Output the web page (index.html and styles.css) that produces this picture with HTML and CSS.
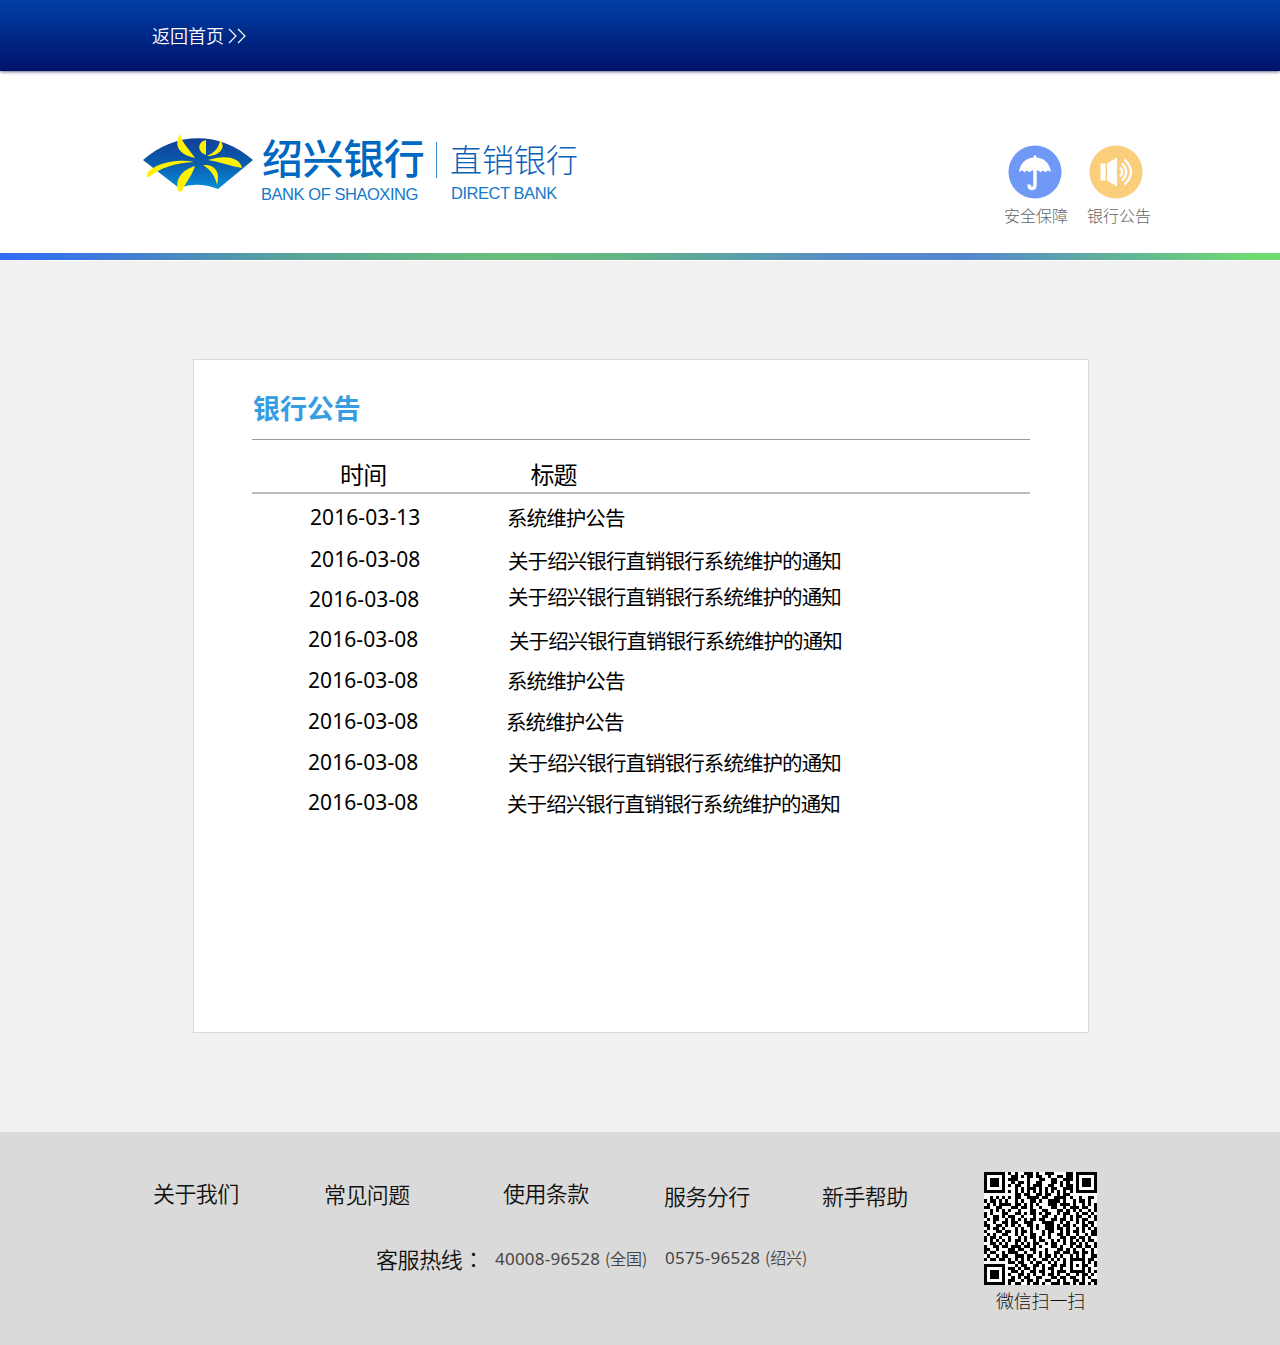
FILE: index.html
```html
<!DOCTYPE html>
<html lang="zh-CN">
<head>
  <meta charset="UTF-8" />
  <meta name="viewport" content="width=device-width, initial-scale=1" />
  <title>银行公告 - 绍兴银行直销银行</title>
  <link rel="stylesheet" href="styles.css">
</head>
<body>
  <div class="topbar">
    <a class="back">返回首页
      <svg width="20" height="18" viewBox="0 0 20 18"><path d="M2 2l7 7-7 7M11 2l7 7-7 7" fill="none" stroke="#fff" stroke-width="1.2"/></svg>
    </a>
  </div>

  <!-- Logo -->
  <div class="header">
    <svg class="fan" width="112" height="60" viewBox="0 0 112 60">
      <defs>
        <linearGradient id="fanBg" x1="0" y1="0" x2="0" y2="1">
          <stop offset="0" stop-color="#123f98"/>
          <stop offset="0.5" stop-color="#0a5cad"/>
          <stop offset="1" stop-color="#0a8ddb"/>
        </linearGradient>
      </defs>
      <path d="M1 26C34 -3 78 -3 111 26L76 55Q56 47 37 54Z" fill="url(#fanBg)"/>
      <g fill="#fff100">
        <path d="M38 0C40 9 48 16 53 24C38 21 31 12 38 0Z"/>
        <path d="M64 6C55 8 55 18 64 21Z"/>
        <path d="M78 6C85 14 77 22 65 22C73 18 77 14 78 6Z"/>
        <path d="M66 26C80 21 98 22 100 34C88 32 78 28 66 26Z"/>
        <path d="M61 31C72 30 79 37 75 51C73 42 69 36 61 31Z"/>
        <path d="M53 32C50 42 43 49 40 57Q37 59 36 56C33 45 40 36 53 32Z"/>
        <path d="M52 28C33 29 18 34 7 43Q4 44 5 40C9 31 34 24 52 28Z"/>
      </g>
    </svg>
    <div class="brand">
      <div class="brand-cn">绍兴银行</div>
      <div class="brand-en">BANK OF SHAOXING</div>
    </div>
    <div class="divider"></div>
    <div class="direct">
      <div class="direct-cn">直销银行</div>
      <div class="brand-en">DIRECT BANK</div>
    </div>
    <div class="shortcuts">
      <a class="shortcut">
        <svg width="54" height="54" viewBox="0 0 54 54">
          <circle cx="27" cy="27" r="26.5" fill="#6f98f7"/>
          <path d="M11 27.500C12 18 18 13 25.500 12.500Q25.500 10 27 10T28.500 12.500C36 13 42 18 43 27.500Q40 23.500 37.500 27.500Q35 24 32.500 27.500Q31 25 28.800 25.500H25.200Q23 25 21.500 27.500Q19 24 16.500 27.500Q14 23.500 11 27.500Z" fill="#fff"/>
          <path d="M27 24V40Q27 43.500 24 43.500T21 39.500" fill="none" stroke="#fff" stroke-width="3.400"/>
        </svg>
        <span>安全保障</span>
      </a>
      <a class="shortcut notice">
        <svg width="54" height="54" viewBox="0 0 54 54">
          <circle cx="27" cy="27" r="26.500" fill="#fbce7b"/>
          <path d="M11.500 18.500h5v17h-5zM18 18.500L28 12.500V41.500L18 35.500Z" fill="#fff"/>
          <path d="M31 22.500Q35.500 27 31 31.500M33 18.500Q41.500 27 33 35.500M35.500 14.500Q48.500 27 35.500 39.500" fill="none" stroke="#fff" stroke-width="2.400"/>
        </svg>
        <span>银行公告</span>
      </a>
    </div>
  </div>
  <div class="rainbow"></div>

  <!-- 公告列表 -->
  <div class="main">
    <div class="panel">
      <h2>银行公告</h2>
      <div class="row head"><span>时间</span><span>标题</span></div>
      <div class="row r1"><span class="date">2016-03-13</span><a>系统维护公告</a></div>
      <div class="row r2"><span class="date">2016-03-08</span><a>关于绍兴银行直销银行系统维护的通知</a></div>
      <div class="row r3"><span class="date">2016-03-08</span><a>关于绍兴银行直销银行系统维护的通知</a></div>
      <div class="row r4"><span class="date">2016-03-08</span><a>关于绍兴银行直销银行系统维护的通知</a></div>
      <div class="row r5"><span class="date">2016-03-08</span><a>系统维护公告</a></div>
      <div class="row r6"><span class="date">2016-03-08</span><a>系统维护公告</a></div>
      <div class="row r7"><span class="date">2016-03-08</span><a>关于绍兴银行直销银行系统维护的通知</a></div>
      <div class="row r8"><span class="date">2016-03-08</span><a>关于绍兴银行直销银行系统维护的通知</a></div>
    </div>
  </div>

  <div class="footer">
    <div class="footer-info">
      <div class="links">
        <a>关于我们</a><a>常见问题</a><a>使用条款</a><a>服务分行</a><a>新手帮助</a>
      </div>
      <div class="hotline">
        <span class="label">客服热线<span class="colon" lang="zh-TW">：</span></span>
        <span class="tel">40008-96528 <small>(全国)</small></span>
        <span class="tel tel2">0575-96528 <small>(绍兴)</small></span>
      </div>
    </div>
    <div class="wechat">
      <svg id="qr" width="113" height="113" viewBox="0 0 37 37" shape-rendering="crispEdges"></svg>
      <span>微信扫一扫</span>
    </div>
  </div>

  <script>
    // 二维码点阵
    const rows = [
      "#######.#.#..###.#..###....##.#######",
      "#.....#..##.#.##.##..#..##.##.#.....#",
      "#.###.#.###...#...##..##..###.#.###.#",
      "#.###.#..#.##.#..##...##.#.#..#.###.#",
      "#.###.#.#.##..#.###..##..#.##.#.###.#",
      "#.....#...#.#.###.#.#.##..###.#.....#",
      "#######.#.#.#.#.#.#.#.#.#.#.#.#######",
      "..........##.##..##.##..#.##.........",
      "..#.#.#.#.##..####.##..####.#..#..##.",
      "#.##.#.#..#.#..##.#..####.#..#.##.#..",
      ".#.#.####.##.#.#.#...###.###.#..#.#.#",
      "##..##...##.##.#..#...##..#.###.##..#",
      "..#.#.#.#..#...##..##...##.#.#.#..#.#",
      "#.#...##..##.#.##.#.##..#.##..#.##.#.",
      "#..##.#.##..#...#..##..#..#.#.##..#.#",
      ".#.##..#.#.#.#.##.##..##.##.#.#.##..#",
      "#..#..##.##..###...####..#.#..#.#.##.",
      "##..##.#.#.#..##.#..###.#.##.#..##.#.",
      ".#.##.#...#.#..#.#..###.##.#..#.#.#.#",
      "#...##.##.#.##.#...#.##..#.#.##.#..##",
      ".#.#..##..#.#..##..#.#..##.#..#..#.##",
      "#.##.#..#..#.#.##.#..#...##.##.##.#..",
      "#.#.#.#.#.##.#..#.##..#.#.#.#.#.#.##.",
      "..##.#.#..#.#.#.##..#.##..#.##.#.#..#",
      "#..##.##.###.##.#.#...##.#..#.##.##.#",
      "##..#...##.##..##...#...##.#.#..#..#.",
      "#.##..#.###..#..#.#.#..##.##.##.##.#.",
      ".#..#.##..###.##..#.##.#.#..#.#.#..##",
      "#.##.##.#.#.#.#.#..##.#.#.#.#####.##.",
      "........##.##..#.##..#.#..#.#...#.#.#",
      "#######...#.##..##.#..##.##.#.#.##..#",
      "#.....#.##.#.##.#..#.##..#..#...#.#..",
      "#.###.#..##.#..##.##..#.###.#####.#.#",
      "#.###.#.#..##.#.#..#.##.#..#..#.##.#.",
      "#.###.#..#.#.##..##...##.##.##..#.#..",
      "#.....#.##..#.##.#..##..#.#..##.#..##",
      "#######.#.##..#.##.#..###.##.#.##.#.#"
    ];
    let d = '';
    rows.forEach((row, y) => {
      [...row].forEach((c, x) => {
        if (c === '#') d += `M${x} ${y}h1v1h-1z`;
      });
    });
    document.getElementById('qr').innerHTML =
      `<rect width="37" height="37" fill="#fff"/><path d="${d}"/>`;
  </script>
</body>
</html>
```
FILE: styles.css
```css
* { box-sizing: border-box; }
body {
  margin: 0;
  width: 1280px;
  font-family: "Noto Sans", "Noto Sans CJK SC", sans-serif;
  background: #f1f1f1;
  color: #000;
}
svg { display: block; flex: none; }
.topbar {
  position: relative;
  height: 71px;
  padding: 0 0 1px 152px;
  display: flex;
  align-items: center;
  background: linear-gradient(#0040a5, #00126a);
  box-shadow: 0 1px 3px rgba(0, 0, 60, 0.6);
}
.back {
  display: flex;
  align-items: center;
  gap: 3px;
  color: #fff;
  font: 350 18px/26px "Noto Sans CJK SC", sans-serif;
}
.back svg { margin-top: 2px; }

/* Header */
.header {
  display: flex;
  align-items: flex-start;
  height: 182px;
  padding: 63px 127px 0 142px;
  background: #fff;
}
.brand {
  width: 164px;
  margin-left: 8px;
  color: #0068c0;
  white-space: nowrap;
}
.brand-cn {
  height: 50px;
  font: 500 41px/44px "Noto Sans CJK SC", sans-serif;
  letter-spacing: -0.4px;
}
.brand-en {
  margin-left: -1px;
  font: 16.5px/20px "Liberation Sans", sans-serif;
  letter-spacing: -0.45px;
  color: #1478c8;
}
.divider {
  width: 1px;
  height: 36px;
  margin: 8px 13px 0 10px;
  background: #3a8fd4;
}
.direct-cn {
  height: 49px;
  font: 300 32px/48px "Noto Sans CJK SC", sans-serif;
  color: #0a62b8;
}
.direct .brand-en { margin-left: 1px; }
.shortcuts {
  display: flex;
  gap: 17px;
  margin: 11px 0 0 auto;
}
.shortcut {
  width: 66px;
  display: flex;
  flex-direction: column;
  padding-left: 4px;
  font: 300 16px/24px "Noto Sans CJK SC", sans-serif;
  color: #666;
}
.shortcut span { margin: 4px 0 0 -4px; white-space: nowrap; }
.notice { padding-left: 2px; }
.notice span { margin-left: -2px; }
.rainbow {
  height: 8px;
  border-bottom: 1px solid #fff;
  background: linear-gradient(90deg, #2f6cf5 0, #3d78e0 90px, #58a39a 290px, #69be7b 500px, #62b585 620px, #5589cc 860px, #5587cf 970px, #5fae9d 1100px, #6fdc70 1260px);
}

/* Panel */
.main { padding: 98px 0 99px 193px; }
.panel {
  width: 896px;
  height: 674px;
  padding: 28px 58px 0;
  background: #fff;
  border: 1px solid #d9d9d9;
}
h2 {
  height: 52px;
  margin: 0;
  padding-left: 1px;
  font: 700 27px/40px "Noto Sans CJK SC", sans-serif;
  letter-spacing: -0.1px;
  color: #369ce3;
  border-bottom: 1px solid #999;
}
.row {
  display: flex;
  align-items: flex-start;
  height: 41px;
  padding-left: 58px;
  font-size: 21px;
  line-height: 30px;
}
.row a {
  margin-left: 87px;
  font-family: "Noto Sans CJK SC", sans-serif;
  font-size: 20.5px;
  letter-spacing: -0.92px;
  white-space: nowrap;
}
.date { width: 111px; letter-spacing: 0.08px; }
.head {
  height: 54px;
  padding: 18px 0 0 88px;
  gap: 144px;
  font: 24px/32px "Noto Sans CJK SC", sans-serif;
  letter-spacing: -0.8px;
  border-bottom: 2px solid #bbb;
}
.r1 { height: 42px; margin-top: 8px; }
.r2, .r3 { height: 40px; }
.r3 { padding-left: 57px; }
.r4, .r5, .r6, .r7, .r8 { padding-left: 56px; }
.r1 a { margin-left: 86px; }
.r2 a { margin-top: 1px; }
.r3 a { margin: -3px 0 0 88px; }
.r4 a { margin: 1px 0 0 90px; }
.r5 a { margin: 0 0 0 88px; }
.r7 { height: 40px; }
.r7 a { margin: 0 0 0 89px; }
.r8 a { margin: 1px 0 0 88px; }

/* Footer */
.footer {
  display: flex;
  height: 213px;
  padding: 39px 183px 0 153px;
  background: #dadada;
  color: #111;
}
.footer-info { flex: 1; }
.links {
  display: flex;
  padding-top: 5px;
  font: 350 22px/32px "Noto Sans CJK SC", sans-serif;
  letter-spacing: -0.6px;
}
.links a { width: 171px; white-space: nowrap; }
.links a:nth-child(2) { width: 179px; padding-top: 1px; }
.links a:nth-child(3) { width: 161px; }
.links a:nth-child(4) { width: 158px; padding-top: 3px; }
.links a:nth-child(5) { width: 90px; padding-top: 3px; }
.hotline {
  display: flex;
  padding: 31px 0 0 223px;
  white-space: nowrap;
}
.label {
  width: 119px;
  font: 350 22px/32px "Noto Sans CJK SC", sans-serif;
  letter-spacing: -0.4px;
}
.colon { font-family: "Noto Sans CJK TC", sans-serif; }
.tel {
  width: 170px;
  padding-top: 1px;
  font-size: 17px;
  letter-spacing: 0.23px;
  line-height: 32px;
  color: #444;
}
.tel small {
  font: 350 16px/30px "Noto Sans CJK SC", sans-serif;
  letter-spacing: -0.1px;
}
.tel2 { padding-top: 0; }
.wechat {
  width: 113px;
  margin-top: 1px;
  display: flex;
  flex-direction: column;
  align-items: center;
  font: 300 18px/26px "Noto Sans CJK SC", sans-serif;
}
.wechat span { margin-top: 2px; letter-spacing: -0.2px; }
```
